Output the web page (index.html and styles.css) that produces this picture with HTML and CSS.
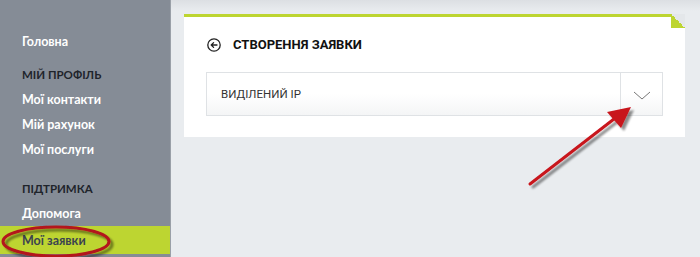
FILE: index.html
```html
<!DOCTYPE html>
<html lang="uk">
<head>
<meta charset="utf-8">
<link rel="stylesheet" href="styles.css">
</head>
<body>
<div class="layout">
  <aside class="sidebar">
    <a class="nav-item first">Головна</a>
    <div class="nav-label">МІЙ ПРОФІЛЬ</div>
    <a class="nav-item">Мої контакти</a>
    <a class="nav-item">Мій рахунок</a>
    <a class="nav-item">Мої послуги</a>
    <div class="nav-label second">ПІДТРИМКА</div>
    <a class="nav-item">Допомога</a>
    <a class="nav-item active">Мої заявки</a>
  </aside>
  <main class="main">
    <section class="card">
      <span class="fold"></span>
      <h1 class="card-title">
        <svg class="back-icon" width="14" height="14" viewBox="0 0 14 14">
          <circle cx="7" cy="7" r="6.2" fill="none" stroke="#222" stroke-width="1.3"/>
          <path d="M10 7H4.3M6.6 4.6L4.2 7l2.4 2.4" fill="none" stroke="#222" stroke-width="1.3" stroke-linecap="round" stroke-linejoin="round"/>
        </svg>
        СТВОРЕННЯ ЗАЯВКИ
      </h1>
      <div class="select">
        <span class="select-value">ВИДІЛЕНИЙ IP</span>
        <span class="select-toggle">
          <svg width="18" height="9" viewBox="0 0 18 9"><path d="M1 1l8 7 8-7" fill="none" stroke="#777" stroke-width="1"/></svg>
        </span>
      </div>
    </section>
  </main>
</div>
<svg class="annotations" width="700" height="257" viewBox="0 0 700 257">
  <defs>
    <filter id="sh" x="-20%" y="-20%" width="140%" height="140%">
      <feGaussianBlur in="SourceAlpha" stdDeviation="1.3"/>
      <feOffset dx="3" dy="3" result="b"/>
      <feComponentTransfer><feFuncA type="linear" slope="0.45"/></feComponentTransfer>
      <feMerge><feMergeNode/><feMergeNode in="SourceGraphic"/></feMerge>
    </filter>
  </defs>
  <ellipse cx="56" cy="241.5" rx="53" ry="14.5" fill="none" stroke="#b3141c" stroke-width="3" filter="url(#sh)"/>
  <g filter="url(#sh)">
    <line x1="530" y1="184" x2="614" y2="119" stroke="#c8141c" stroke-width="3" stroke-linecap="round"/>
    <path d="M631 107L607 112L621 128Z" fill="#c8141c"/>
  </g>
</svg>
</body>
</html>
```
FILE: styles.css
```css
* { box-sizing: border-box; }
html, body { margin: 0; padding: 0; }
body {
  width: 700px;
  height: 257px;
  overflow: hidden;
  font-family: Lato, "Liberation Sans", sans-serif;
  background: #e9ecef;
  position: relative;
}
.layout {
  display: flex;
  height: 257px;
}
.sidebar {
  width: 171px;
  flex: none;
  background: #858c96;
  display: flex;
  flex-direction: column;
  padding-top: 28px;
  border-right: 1px solid #9aa0a8;
}
.nav-item {
  display: flex;
  align-items: center;
  height: 25px;
  padding-left: 22px;
  color: #fff;
  font-weight: 700;
  font-size: 12.5px;
}
.nav-item.first { height: 26px; }
.nav-item.active {
  height: 28px;
  background: #bdd531;
  color: #3b4350;
}
.nav-label {
  display: flex;
  align-items: center;
  height: 26px;
  margin-top: 7px;
  padding-left: 22px;
  color: #1f242b;
  font-weight: 700;
  font-size: 11.5px;
}
.nav-label.second { margin-top: 13px; }
.main {
  flex: 1;
  padding: 14px 14px 0 13px;
  background: linear-gradient(#dcdfe3 0, #e9ecef 11px, #e9ecef 100%);
}
.card {
  position: relative;
  width: 501px;
  background: #fff;
  border-top: 3px solid #bdd531;
  padding: 0 22px 21px 22px;
}
.fold {
  position: absolute;
  right: 0;
  top: -3px;
  width: 14px;
  height: 14px;
  background: linear-gradient(225deg, #e4e7ea 50%, #bdd531 50%);
}
.card-title {
  margin: 0;
  height: 55px;
  display: flex;
  align-items: center;
  gap: 12px;
  padding-left: 1px;
  font-family: Roboto, "Liberation Sans", sans-serif;
  font-weight: 700;
  font-size: 13px;
  color: #111;
}
.back-icon { flex: none; }
.select {
  display: flex;
  height: 44px;
  border: 1px solid #dfe2e5;
  background: linear-gradient(#fff 0, #fff 50%, #f4f5f6 100%);
}
.select-value {
  flex: 1;
  display: flex;
  align-items: center;
  padding-left: 14px;
  font-family: Roboto, "Liberation Sans", sans-serif;
  font-size: 11.5px;
  color: #333;
}
.select-toggle {
  width: 42px;
  border-left: 1px solid #dfe2e5;
  display: flex;
  align-items: center;
  justify-content: center;
  padding-top: 3px;
}
.annotations {
  position: absolute;
  left: 0;
  top: 0;
  pointer-events: none;
}
```
